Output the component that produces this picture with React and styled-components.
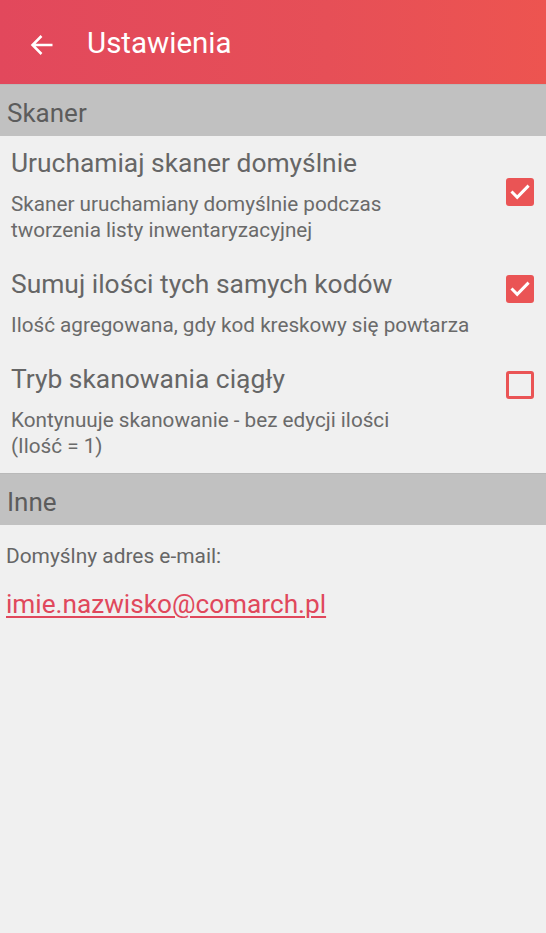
import styled, { createGlobalStyle } from "styled-components";

const GlobalStyle = createGlobalStyle`
  html, body {
    margin: 0;
    padding: 0;
    background: #f0f0f0;
  }
  body {
    font-family: Roboto, "Noto Sans", sans-serif;
  }
`;

const settings = [
  {
    title: "Uruchamiaj skaner domyślnie",
    lines: ["Skaner uruchamiany domyślnie podczas", "tworzenia listy inwentaryzacyjnej"],
    checked: true,
    top: 30,
  },
  {
    title: "Sumuj ilości tych samych kodów",
    lines: ["Ilość agregowana, gdy kod kreskowy się powtarza"],
    checked: true,
    top: 6,
  },
  {
    title: "Tryb skanowania ciągły",
    lines: ["Kontynuuje skanowanie - bez edycji ilości", "(Ilość = 1)"],
    checked: false,
    top: 7,
  },
];

export default function App() {
  return (
    <>
      <GlobalStyle />
      <Page>
        <Toolbar>
          <BackButton aria-label="Wstecz">
            <svg width="24" height="24" viewBox="0 0 24 24">
              <path
                d="M23.5 12H3.5M12.5 3L3.5 12l9 9"
                fill="none"
                stroke="#fff"
                strokeWidth="2.5"
                strokeLinejoin="miter"
              />
            </svg>
          </BackButton>
          <ToolbarTitle>Ustawienia</ToolbarTitle>
        </Toolbar>

        <SectionHeader>Skaner</SectionHeader>
        {settings.map((item) => (
          <Row key={item.title}>
            <RowText>
              <RowTitle>{item.title}</RowTitle>
              <RowSummary>
                {item.lines.map((line) => (
                  <div key={line}>{line}</div>
                ))}
              </RowSummary>
            </RowText>
            <CheckBox $checked={item.checked} $top={item.top}>
              {item.checked && (
                <svg width="28" height="28" viewBox="0 0 28 28">
                  <path
                    d="M5.5 13.5l5.7 5.8L22.6 7.6"
                    fill="none"
                    stroke="#fff"
                    strokeWidth="3"
                  />
                </svg>
              )}
            </CheckBox>
          </Row>
        ))}

        <SectionHeader>Inne</SectionHeader>
        <EmailBlock>
          <EmailLabel>Domyślny adres e-mail:</EmailLabel>
          <EmailLink href="#">imie.nazwisko@comarch.pl</EmailLink>
        </EmailBlock>
      </Page>
    </>
  );
}

const Page = styled.div`
  width: 546px;
  min-height: 933px;
  background: #f0f0f0;
`;

const Toolbar = styled.div`
  display: flex;
  align-items: center;
  height: 84px;
  background: linear-gradient(90deg, #e2485c 0%, #e64f57 60%, #ed5450 100%);
`;

const BackButton = styled.div`
  display: flex;
  width: 24px;
  height: 24px;
  margin-left: 29px;
  margin-top: 6px;
`;

const ToolbarTitle = styled.div`
  margin-left: 34px;
  color: #fff;
  font-size: 29.5px;
  line-height: 32px;
  margin-top: 1px;
`;

const SectionHeader = styled.div`
  height: 52px;
  box-sizing: border-box;
  padding: 4px 7px 0;
  line-height: 48px;
  background: #c1c1c1;
  border-top: 1px solid #b9b9b9;
  color: #5c5c5c;
  font-size: 26px;
`;

const Row = styled.div`
  display: flex;
  align-items: flex-start;
  justify-content: space-between;
  padding: 12px 12px 14px 11px;
`;

const RowText = styled.div`
  display: flex;
  flex-direction: column;
  gap: 13px;
`;

const RowTitle = styled.div`
  color: #666;
  font-size: 26.4px;
  line-height: 30px;
`;

const RowSummary = styled.div`
  color: #6a6a6a;
  font-size: 20.7px;
  line-height: 26px;
`;

const CheckBox = styled.div`
  flex: none;
  display: flex;
  width: 28px;
  height: 28px;
  box-sizing: border-box;
  margin-top: ${(p) => p.$top}px;
  border-radius: 3px;
  background: ${(p) => (p.$checked ? "#ea5455" : "transparent")};
  border: ${(p) => (p.$checked ? "none" : "3px solid #ea5455")};
`;

const EmailBlock = styled.div`
  display: flex;
  flex-direction: column;
  align-items: flex-start;
  padding: 18px 7px 0 6px;
  gap: 20px;
`;

const EmailLabel = styled.div`
  color: #666;
  font-size: 20.9px;
  line-height: 26px;
`;

const EmailLink = styled.a`
  color: #e0485c;
  font-size: 26.2px;
  line-height: 30px;
  text-decoration: underline;
  text-underline-offset: 3px;
  text-decoration-thickness: 2px;
`;
